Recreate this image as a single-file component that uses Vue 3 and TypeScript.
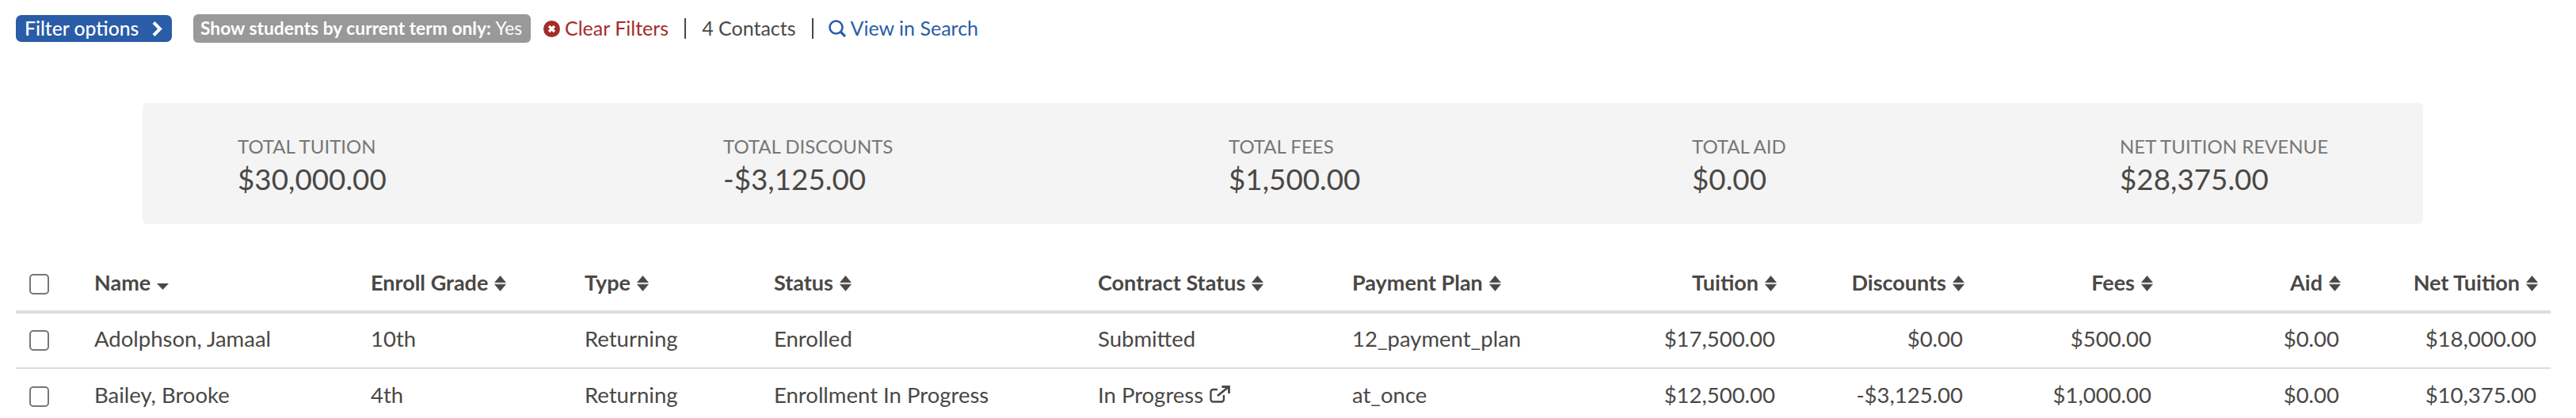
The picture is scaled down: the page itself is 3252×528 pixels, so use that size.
<script setup lang="ts">
type Align = 'left' | 'right'
interface Col { key: string; label: string; width: number; align: Align; caret?: boolean }
const cols: Col[] = [
  { key: 'name', label: 'Name', width: 349, align: 'left', caret: true },
  { key: 'grade', label: 'Enroll Grade', width: 270, align: 'left' },
  { key: 'type', label: 'Type', width: 239, align: 'left' },
  { key: 'status', label: 'Status', width: 409, align: 'left' },
  { key: 'contract', label: 'Contract Status', width: 321, align: 'left' },
  { key: 'plan', label: 'Payment Plan', width: 250, align: 'left' },
  { key: 'tuition', label: 'Tuition', width: 286, align: 'right' },
  { key: 'discounts', label: 'Discounts', width: 237, align: 'right' },
  { key: 'fees', label: 'Fees', width: 238, align: 'right' },
  { key: 'aid', label: 'Aid', width: 237, align: 'right' },
  { key: 'net', label: 'Net Tuition', width: 249, align: 'right' },
]
const rows: Record<string, string>[] = [
  { name: 'Adolphson, Jamaal', grade: '10th', type: 'Returning', status: 'Enrolled', contract: 'Submitted', plan: '12_payment_plan', tuition: '$17,500.00', discounts: '$0.00', fees: '$500.00', aid: '$0.00', net: '$18,000.00' },
  { name: 'Bailey, Brooke', grade: '4th', type: 'Returning', status: 'Enrollment In Progress', contract: 'In Progress', plan: 'at_once', tuition: '$12,500.00', discounts: '-$3,125.00', fees: '$1,000.00', aid: '$0.00', net: '$10,375.00' },
]
const totals = [
  { label: 'TOTAL TUITION', value: '$30,000.00', w: 613 },
  { label: 'TOTAL DISCOUNTS', value: '-$3,125.00', w: 638 },
  { label: 'TOTAL FEES', value: '$1,500.00', w: 585 },
  { label: 'TOTAL AID', value: '$0.00', w: 540 },
  { label: 'NET TUITION REVENUE', value: '$28,375.00', w: 383 },
]
</script>

<template>
  <div class="page">
    <div class="toolbar">
      <button class="filter-btn">
        <span class="lift">Filter options</span>
        <svg width="15" height="21" viewBox="0 0 15 21"><path d="M3 2.500l8 8-8 8" fill="none" stroke="#fff" stroke-width="4" /></svg>
      </button>
      <span class="chip">Show students by current term only: <em>Yes</em></span>
      <a class="clear">
        <svg width="21" height="21" viewBox="0 0 21 21"><circle cx="10.500" cy="10.500" r="10.500" fill="#a62b2b" /><path d="M7 7l7 7M14 7l-7 7" stroke="#fff" stroke-width="3.200" /></svg>
        <span class="lift">Clear Filters</span>
      </a>
      <span class="count"><span class="lift">4 Contacts</span></span>
      <a class="search">
        <svg width="22" height="22" viewBox="0 0 22 22"><circle cx="9.500" cy="9.500" r="8" fill="none" stroke="#2a5ca8" stroke-width="2.600" /><path d="M15 15l6 6" stroke="#2a5ca8" stroke-width="3.200" /></svg>
        <span class="lift">View in Search</span>
      </a>
    </div>

    <div class="totals">
      <div v-for="t in totals" :key="t.label" class="total" :style="{ width: t.w + 'px' }">
        <div class="total-label">{{ t.label }}</div>
        <div class="total-value">{{ t.value }}</div>
      </div>
    </div>

    <div class="table">
      <div class="tr head">
        <div class="check-cell"><span class="box"></span></div>
        <div v-for="c in cols" :key="c.key" class="td" :class="c.align" :style="{ width: c.width + 'px' }">
          <span class="lift-more">{{ c.label }}</span>
          <svg v-if="c.caret" class="caret" width="15" height="8" viewBox="0 0 15 8"><path d="M0 0h15L7.500 8z" fill="#4a4845" /></svg>
          <svg v-else class="sort" width="15" height="20" viewBox="0 0 15 20"><path d="M7.500 0.500l7 8.300H0.500zM7.500 19.500l-7-8.300h14z" fill="#4a4845" stroke="#4a4845" stroke-width="0.600" stroke-linejoin="round" /></svg>
        </div>
      </div>
      <div v-for="r in rows" :key="r.name" class="tr row">
        <div class="check-cell"><span class="box"></span></div>
        <div v-for="c in cols" :key="c.key" class="td" :class="c.align" :style="{ width: c.width + 'px' }">
          <span class="lift-more">{{ r[c.key] }}</span>
          <svg v-if="r[c.key] === 'In Progress'" class="ext" width="26" height="22" viewBox="0 0 26 22"><path d="M10 5H4.500a3 3 0 0 0-3 3v9.500a3 3 0 0 0 3 3H15a3 3 0 0 0 3-3V12" fill="none" stroke="#4a4845" stroke-width="2.400" /><path d="M10 13L23 2.500M15.500 1.500h9v8.500" fill="none" stroke="#4a4845" stroke-width="2.800" /></svg>
        </div>
      </div>
    </div>
  </div>
</template>

<style scoped>
.page {
  width: 3252px;
  height: 528px;
  box-sizing: border-box;
  padding: 18px 20px 0;
  font-family: "Lato", "Noto Sans", sans-serif;
  color: #4a4845;
  overflow: hidden;
  background: #fff;
}
.lift { display: inline-block; padding-bottom: 2px; }
.lift-more { display: inline-block; padding-bottom: 5px; }
.toolbar {
  display: flex;
  align-items: center;
  height: 36px;
  font-size: 25px;
}
.filter-btn {
  display: flex;
  align-items: center;
  justify-content: space-between;
  box-sizing: border-box;
  width: 197px;
  height: 34px;
  padding: 0 11px;
  border: 0;
  border-radius: 7px;
  background: #2a5ca8;
  color: #fff;
  font: 500 24.700px "Lato", sans-serif;
}
.chip {
  box-sizing: border-box;
  width: 426px;
  margin-left: 27px;
  padding-left: 9px;
  height: 36px;
  line-height: 34px;
  border-radius: 6px;
  background: #999;
  color: #fff;
  font-size: 22.800px;
  font-weight: 700;
  white-space: nowrap;
}
.chip em { font-style: normal; font-weight: 400; }
.clear {
  display: flex;
  align-items: center;
  gap: 6px;
  margin-left: 16px;
  color: #a62b2b;
}
.count {
  margin-left: 20px;
  padding: 0 20px;
  border-left: 2px solid #4a4845;
  border-right: 2px solid #4a4845;
  line-height: 24px;
}
.search {
  display: flex;
  align-items: center;
  gap: 6px;
  margin-left: 19px;
  color: #2a5ca8;
}
.totals {
  display: flex;
  align-items: center;
  box-sizing: border-box;
  width: 2879px;
  height: 153px;
  margin: 76px 0 0 160px;
  padding: 7px 0 0 120px;
  background: #f4f4f4;
  border-radius: 6px;
}
.total { flex: none; }
.total-label { font-size: 24px; color: #777; line-height: 30px; }
.total-value { font-size: 36.800px; color: #4a4845; line-height: 48px; margin-top: 2px; }
.table { margin-top: 43px; width: 3200px; font-size: 27.500px; }
.tr { display: flex; align-items: center; box-sizing: border-box; }
.head { height: 70px; font-weight: 700; border-bottom: 4px solid #ddd; font-size: 27px; }
.row { height: 70px; border-bottom: 2px solid #ddd; }
.row:last-child { border-bottom: 0; }
.check-cell { flex: none; width: 99px; display: flex; padding-left: 17px; box-sizing: border-box; }
.box {
  width: 25px;
  height: 26px;
  box-sizing: border-box;
  border: 2px solid #777;
  border-radius: 5px;
  background: #fff;
}
.td { flex: none; display: flex; align-items: center; gap: 8px; box-sizing: border-box; white-space: nowrap; }
.td.right { justify-content: flex-end; }
.row .td.right { padding-right: 2px; }
.caret { margin-top: 6px; }
.sort { margin-top: -2px; }
.ext { margin-top: -6px; }
</style>
